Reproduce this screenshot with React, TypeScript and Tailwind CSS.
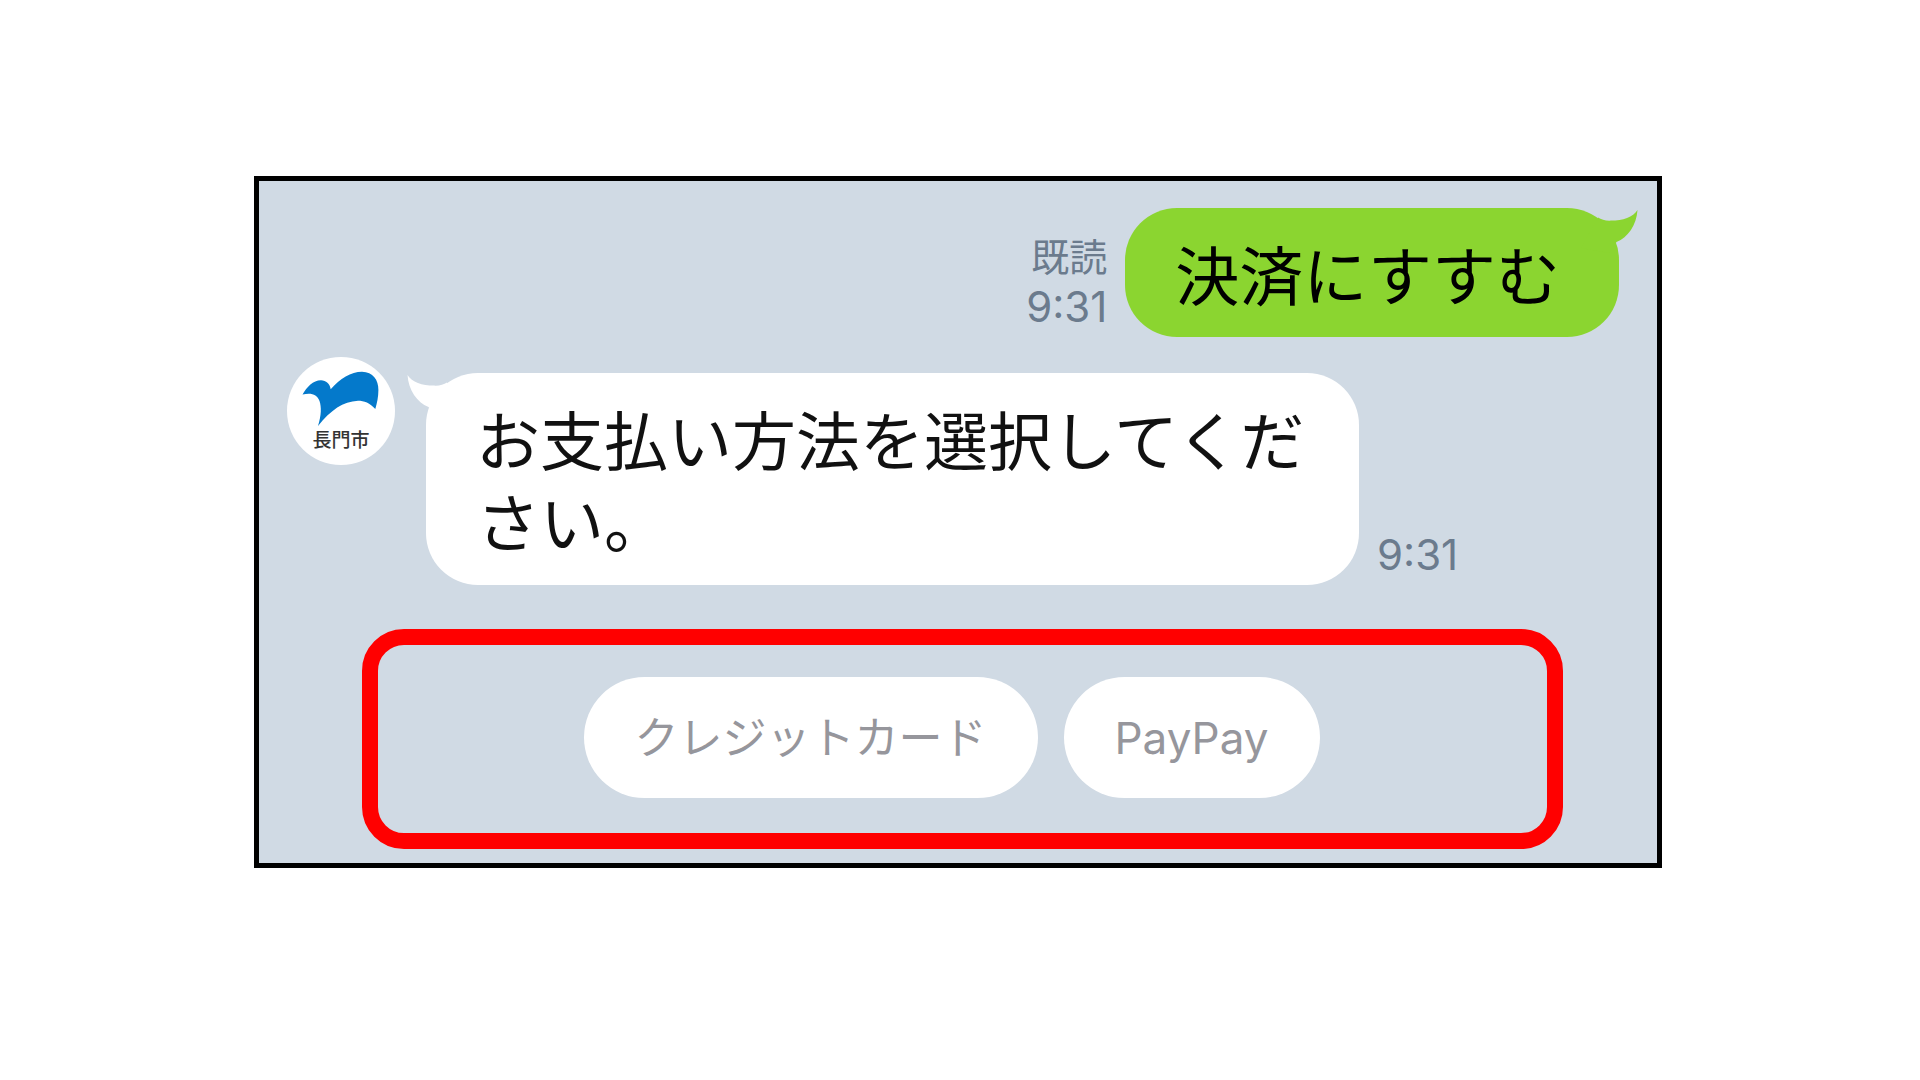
const replies = ["クレジットカード", "PayPay"];

const Tail = ({ className }: { className: string }) => (
  <svg
    className={`absolute top-0 h-[50px] w-[60px] ${className}`}
    viewBox="0 0 60 50"
    fill="currentColor"
    aria-hidden="true"
  >
    <path d="M1.5 2 C6 9.5 16 12.5 28 12.6 Q36 13 41 9.5 L58 40 L30 45 L22.5 34 C11 29.5 2.5 17 1.5 2Z" />
  </svg>
);

const Avatar = () => (
  <svg className="size-[108px] shrink-0" viewBox="0 0 108 108">
    <circle cx="54" cy="54" r="54" fill="#fff" />
    <path
      fill="#0479cb"
      d="M15.5 37.5 C20 30 26 23.5 34 23.3 C39 23.3 43 27 43.7 32.3 C53 21.5 64 14.8 75 14.8 C86 15 91.5 23 91.4 33 C91.4 40 90 46 88.3 52 C83 46 77 43.8 71 43.8 C56 44.5 44 53 31 69 C34.5 58 34.5 50 32.5 44 C30 37 24 35.5 15.5 37.5Z"
    />
    <text
      x="54"
      y="90"
      textAnchor="middle"
      fontSize="19"
      fill="#333"
      className="font-['Noto_Sans_CJK_JP',sans-serif] font-medium"
    >
      長門市
    </text>
  </svg>
);

export default function App() {
  return (
    <main className="flex min-h-screen items-start justify-center bg-white pt-44 pr-1 font-['Inter','Noto_Sans_CJK_JP',sans-serif]">
      <section className="w-full max-w-[1408px] border-5 border-black bg-[#d0dae4] pt-[27px] pb-3.5">
        {/* sent */}
        <div className="flex items-end justify-end gap-[18px] pr-[38px]">
          <div className="pb-[5px] text-right text-[#6b7b8d]">
            <p className="text-[38px] leading-[50px]">既読</p>
            <p className="text-[42px] leading-[50px]">9:31</p>
          </div>
          <div className="relative rounded-[52px] bg-[#8bd530] pt-7 pr-[59px] pb-[19px] pl-[50px] text-[64px] leading-[82px] text-black">
            <Tail className="-right-5 -scale-x-100 text-[#8bd530]" />
            <p className="relative">決済にすすむ</p>
          </div>
        </div>

        {/* received */}
        <div className="mt-5 flex items-start pl-7">
          <Avatar />
          <div className="mt-4 ml-[31px] flex items-end gap-[18px]">
            <div className="relative max-w-[933px] rounded-[52px] bg-white pt-7 pr-[51px] pb-5 pl-[50px] text-[64px] leading-[82px] text-[#111]">
              <Tail className="-left-5 text-white" />
              <p className="relative">お支払い方法を選択してください。</p>
            </div>
            <p className="pb-[5px] text-[42px] leading-[50px] text-[#6b7b8d]">
              9:31
            </p>
          </div>
        </div>

        {/* quick replies */}
        <div className="mt-11 mr-[94px] ml-[103px] flex justify-center gap-[26px] rounded-[42px] border-16 border-[#ff0000] pt-8 pr-[22px] pb-[35px]">
          {replies.map((reply) => (
            <button
              key={reply}
              type="button"
              className="h-[121px] rounded-full bg-white px-[51px] text-[44px] text-[#96969c]"
            >
              {reply}
            </button>
          ))}
        </div>
      </section>
    </main>
  );
}
